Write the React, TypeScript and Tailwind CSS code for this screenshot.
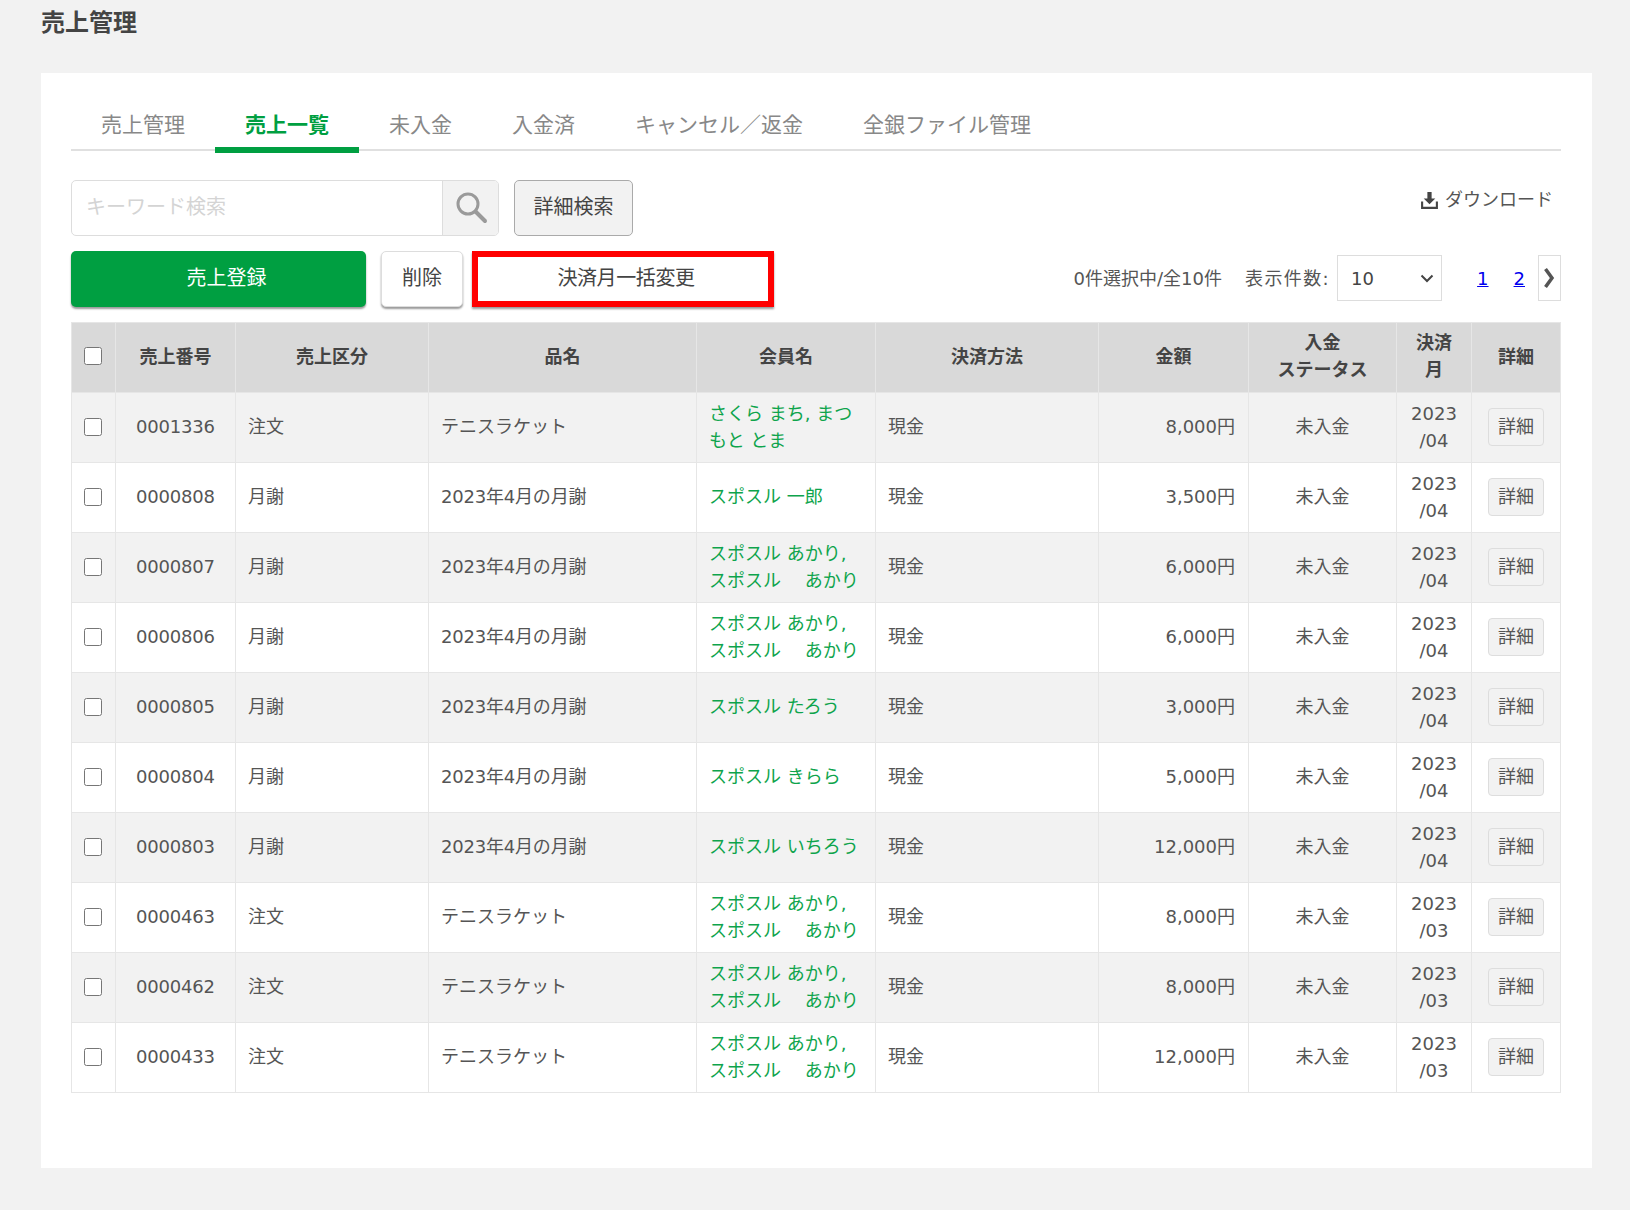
import * as React from "react";

const tabs = ["売上管理", "売上一覧", "未入金", "入金済", "キャンセル／返金", "全銀ファイル管理"];

const AKARI = ["スポスル あかり,", "スポスル　 あかり"];

const rows = [
  { no: "0001336", type: "注文", item: "テニスラケット", member: ["さくら まち, まつ", "もと とま"], amount: "8,000円", month: "/04" },
  { no: "0000808", type: "月謝", item: "2023年4月の月謝", member: ["スポスル 一郎"], amount: "3,500円", month: "/04" },
  { no: "0000807", type: "月謝", item: "2023年4月の月謝", member: AKARI, amount: "6,000円", month: "/04" },
  { no: "0000806", type: "月謝", item: "2023年4月の月謝", member: AKARI, amount: "6,000円", month: "/04" },
  { no: "0000805", type: "月謝", item: "2023年4月の月謝", member: ["スポスル たろう"], amount: "3,000円", month: "/04" },
  { no: "0000804", type: "月謝", item: "2023年4月の月謝", member: ["スポスル きらら"], amount: "5,000円", month: "/04" },
  { no: "0000803", type: "月謝", item: "2023年4月の月謝", member: ["スポスル いちろう"], amount: "12,000円", month: "/04" },
  { no: "0000463", type: "注文", item: "テニスラケット", member: AKARI, amount: "8,000円", month: "/03" },
  { no: "0000462", type: "注文", item: "テニスラケット", member: AKARI, amount: "8,000円", month: "/03" },
  { no: "0000433", type: "注文", item: "テニスラケット", member: AKARI, amount: "12,000円", month: "/03" },
];

const th = "border border-[#e6e6e6] bg-[#d9d9d9] text-center font-bold text-[18px] leading-[27px] text-[#444] p-0 pb-[3px]";
const td = "border border-[#e6e6e6] text-[18px] leading-[27px] text-[#555] px-[12px] pt-0 pb-[2px]";

export default function App() {
  return (
    <div className="min-h-[1210px] bg-[#f2f2f2] font-['DejaVu_Sans','Noto_Sans_CJK_JP',sans-serif]">
      {/* Header */}
      <div className="h-[73px] pl-[41px] pt-[5px]">
        <h1 className="text-[24px] leading-[36px] font-bold text-[#444]">売上管理</h1>
      </div>

      <div className="ml-[41px] mr-[38px] h-[1095px] bg-white pl-[30px] pr-[31px] pt-[27px]">
        {/* Tabs */}
        <div className="flex h-[51px] border-b-2 border-[#e0e0e0]">
          {tabs.map((t) =>
            t === "売上一覧" ? (
              <div key={t} className="h-[53px] border-b-[6px] border-[#009f41] px-[30px] pt-[7px] text-[21px] leading-[36px] font-bold text-[#009f41]">
                {t}
              </div>
            ) : (
              <div key={t} className="px-[30px] pt-[7px] text-[21px] leading-[36px] text-[#888]">
                {t}
              </div>
            )
          )}
        </div>

        {/* Search */}
        <div className="mt-[29px] flex h-[56px] items-start">
          <div className="flex h-[56px] w-[428px] overflow-hidden rounded-[5px] border border-[#dddddd]">
            <div className="flex-1 pl-[14px] text-[20px] leading-[52px] text-[#d4d4d4]">キーワード検索</div>
            <div className="flex w-[56px] items-center justify-center border-l border-[#dddddd] bg-[#f2f2f2]">
              <svg width="34" height="34" viewBox="0 0 34 34" fill="none" stroke="#9a9a9a">
                <circle cx="14" cy="13" r="10" strokeWidth="3" />
                <path d="M21.5 20.5 L31 30" strokeWidth="4" strokeLinecap="round" />
              </svg>
            </div>
          </div>
          <button className="ml-[15px] h-[56px] w-[119px] rounded-[5px] border border-[#aaaaaa] bg-[#f2f2f2] pb-[2px] text-[20px] text-[#444]">
            詳細検索
          </button>
          <div className="ml-auto mr-[8px] mt-[4px] flex items-center gap-[6px] text-[18px] leading-[32px] text-[#555]">
            <svg width="19" height="19" viewBox="0 0 18 18" fill="#444">
              <path d="M7 1h4v6h3.5L9 12.5 3.5 7H7z" />
              <path d="M1 10h2v5h12v-5h2v7H1z" />
            </svg>
            ダウンロード
          </div>
        </div>

        {/* Actions */}
        <div className="mt-[15px] flex h-[56px] items-start">
          <button className="h-[56px] w-[295px] rounded-[5px] bg-[#009f41] pb-[2px] pl-[16px] text-[20px] text-white shadow-[0_2px_2px_rgba(0,0,0,0.4)]">
            売上登録
          </button>
          <button className="ml-[15px] h-[56px] w-[82px] rounded-[5px] border border-[#dddddd] bg-white pb-[2px] text-[20px] text-[#444] shadow-[0_2px_2px_rgba(0,0,0,0.4)]">
            削除
          </button>
          <button className="ml-[9px] h-[56px] w-[302px] border-[6px] border-[#ff0000] bg-white pb-[2px] pl-[6px] text-[20px] tracking-[-0.4px] text-[#444] shadow-[0_2px_2px_rgba(0,0,0,0.4)]">
            決済月一括変更
          </button>
          <div className="ml-auto flex h-[56px] items-center pb-[2px] text-[18px] text-[#555]">
            <span>0件選択中/全10件</span>
            <span className="ml-[23px] tracking-[1.4px]">表示件数:</span>
            <div className="relative ml-[7px]">
              <select className="block h-[46px] w-[105px] appearance-none border border-[#dddddd] bg-white pl-[13px] text-[18px] text-[#444]">
                <option>10</option>
                <option>20</option>
              </select>
              <svg className="pointer-events-none absolute right-[8px] top-[19px]" width="14" height="9" viewBox="0 0 14 9" fill="none" stroke="#444" strokeWidth="2">
                <path d="M1.5 1.5 L7 7 L12.5 1.5" />
              </svg>
            </div>
            <a href="#" className="ml-[35px] text-[#0000ee] underline">1</a>
            <a href="#" className="ml-[25px] text-[#0000ee] underline">2</a>
            <div className="ml-[13px] flex h-[46px] w-[23px] items-center justify-center border border-[#dddddd] pr-[2px]">
              <svg width="12" height="22" viewBox="0 0 12 22" fill="none" stroke="#555" strokeWidth="3.5">
                <path d="M2.5 2 L9 11 L2.5 20" />
              </svg>
            </div>
          </div>
        </div>

        {/* Table */}
        <table className="mt-[15px] w-[1489px] table-fixed border-collapse">
          <colgroup>
            <col className="w-[44px]" />
            <col className="w-[120px]" />
            <col className="w-[193px]" />
            <col className="w-[268px]" />
            <col className="w-[179px]" />
            <col className="w-[223px]" />
            <col className="w-[150px]" />
            <col className="w-[148px]" />
            <col className="w-[75px]" />
            <col className="w-[89px]" />
          </colgroup>
          <thead>
            <tr className="h-[70px]">
              <th className={th + " pr-[2px]"}>
                <input type="checkbox" className="block mx-auto h-[18px] w-[18px]" />
              </th>
              <th className={th}>売上番号</th>
              <th className={th}>売上区分</th>
              <th className={th}>品名</th>
              <th className={th}>会員名</th>
              <th className={th}>決済方法</th>
              <th className={th}>金額</th>
              <th className={th}>入金<br />ステータス</th>
              <th className={th}>決済<br />月</th>
              <th className={th}>詳細</th>
            </tr>
          </thead>
          <tbody>
            {rows.map((r, i) => (
              <tr key={r.no} className={i % 2 === 0 ? "h-[70px] bg-[#f2f2f2]" : "h-[70px] bg-white"}>
                <td className="border border-[#e6e6e6] p-0 pr-[2px] pb-[2px]">
                  <input type="checkbox" className="block mx-auto h-[18px] w-[18px]" />
                </td>
                <td className={td + " text-center tracking-[-0.2px]"}>{r.no}</td>
                <td className={td}>{r.type}</td>
                <td className={r.type === "月謝" ? td + " tracking-[-0.2px]" : td}>{r.item}</td>
                <td className="border border-[#e6e6e6] px-[12px] pt-0 pb-[2px] text-[18px] leading-[27px] text-[#0ea44c]">
                  {r.member.map((m) => (
                    <div key={m} className="whitespace-nowrap">{m}</div>
                  ))}
                </td>
                <td className={td}>現金</td>
                <td className={td + " text-right pr-[13px]"}>{r.amount}</td>
                <td className={td + " text-center"}>未入金</td>
                <td className="border border-[#e6e6e6] p-0 pb-[2px] text-center text-[18px] leading-[27px] text-[#555]">
                  2023<br />{r.month}
                </td>
                <td className="border border-[#e6e6e6] p-0 pb-[1px] text-center">
                  <button className="mx-auto block h-[38px] w-[56px] rounded-[4px] border border-[#dddddd] bg-[#f2f2f2] pb-[1px] text-[18px] text-[#555]">
                    詳細
                  </button>
                </td>
              </tr>
            ))}
          </tbody>
        </table>
      </div>
    </div>
  );
}
